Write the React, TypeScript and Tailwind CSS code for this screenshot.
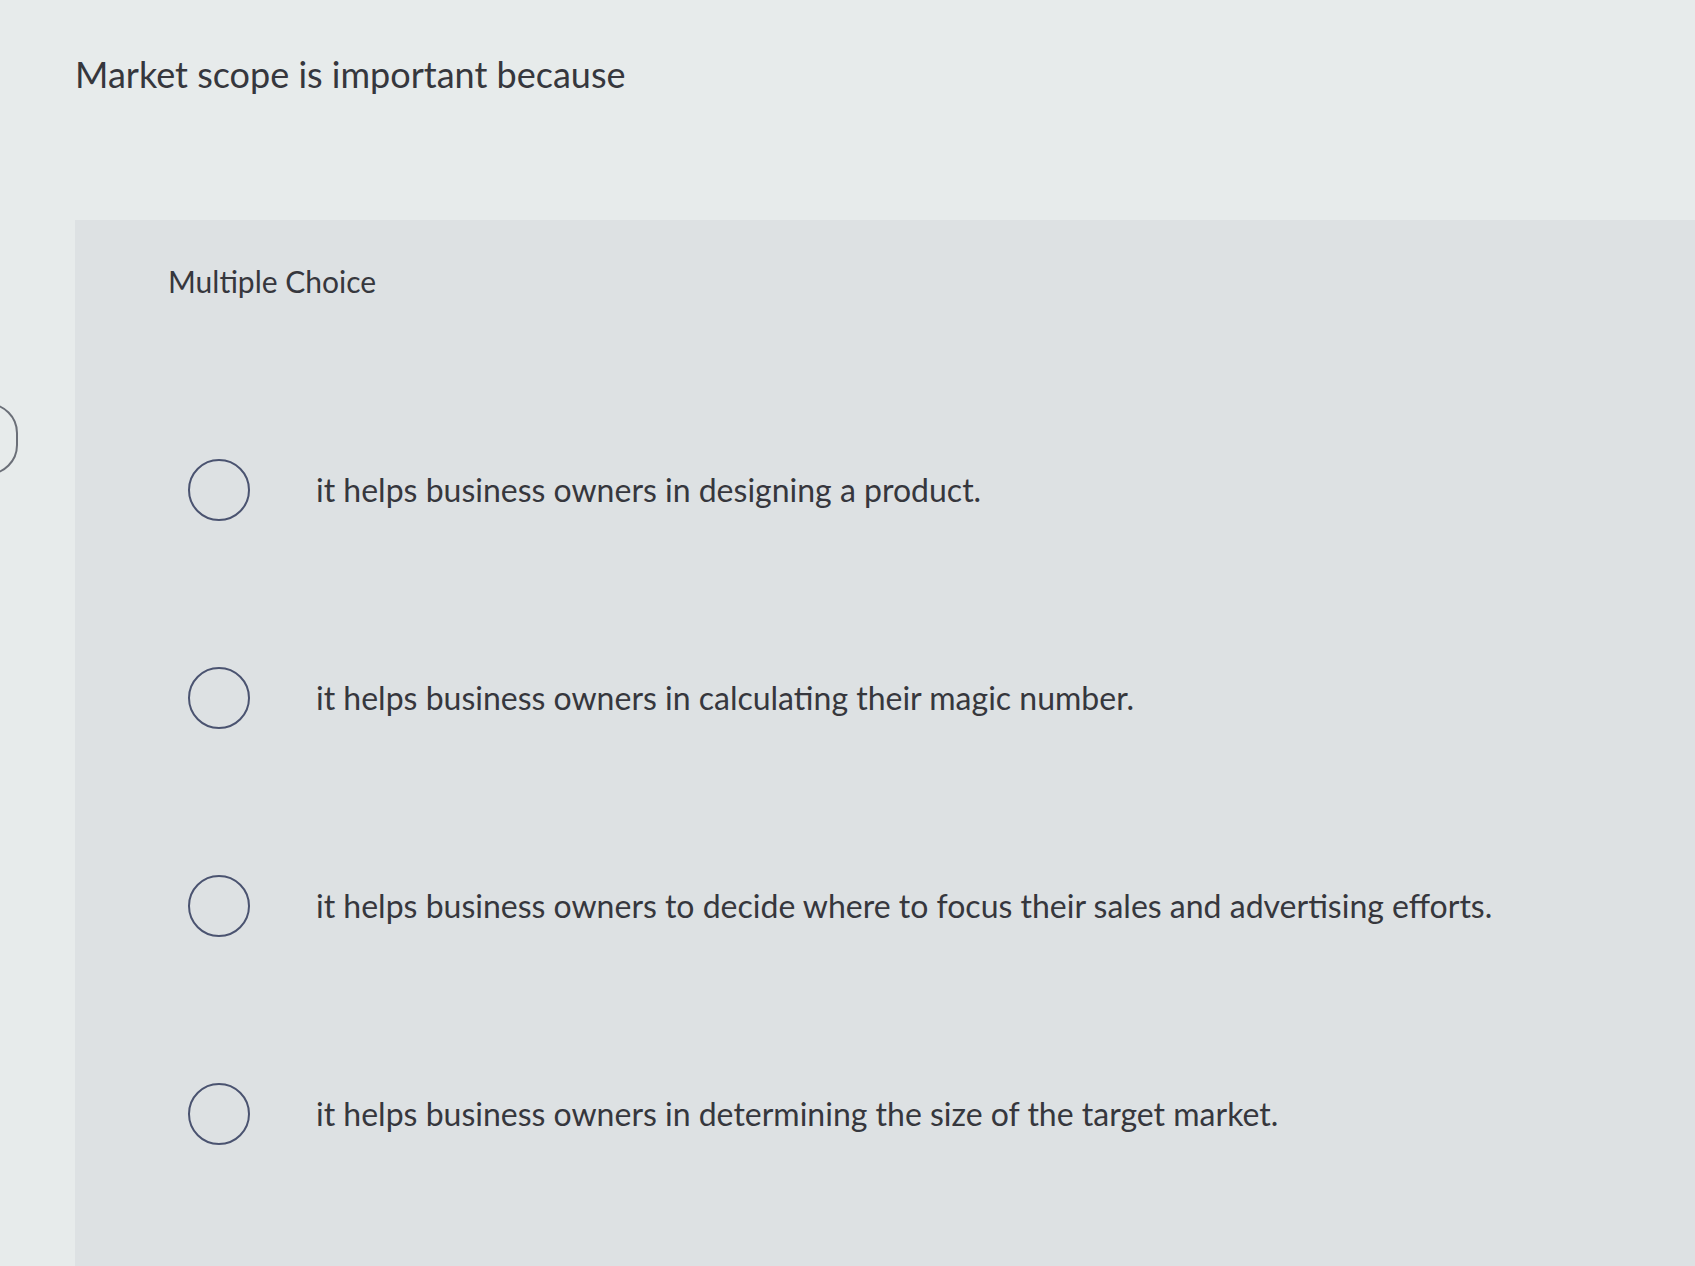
import React from 'react';

const options = [
   'it helps business owners in designing a product.',
   'it helps business owners in calculating their magic number.',
   'it helps business owners to decide where to focus their sales and advertising efforts.',
   'it helps business owners in determining the size of the target market.',
];

const App = () => {
   return (
      <div
         className="relative min-h-screen w-full overflow-hidden bg-[#e7ebeb] text-[#36373d]"
         style={{ fontFamily: 'Lato, "Open Sans", sans-serif' }}
      >
         {/* side toggle cut off by the screen edge */}
         <div className="absolute left-[-52px] top-[403px] h-[72px] w-[70px] rounded-[30px] border-2 border-[#6b6f78]" />

         <div className="flex min-h-screen flex-col pl-[75px]">
            <h1 className="pt-[52px] text-[36px] leading-[44px] font-normal">
               Market scope is important because
            </h1>

            <div className="mt-[124px] flex flex-1 flex-col bg-[#dde1e3] pb-[120px] pl-[93px] pt-[44px]">
               <p className="text-[30px] leading-[34px]">Multiple Choice</p>

               <div className="mt-[161px] flex flex-col gap-[146px] pl-[20px]">
                  {options.map((text) => (
                     <label key={text} className="flex cursor-pointer items-center">
                        <span className="h-[62px] w-[62px] shrink-0 rounded-full border-2 border-[#4a5370]" />
                        <span className="ml-[66px] text-[32px] leading-[62px]">{text}</span>
                     </label>
                  ))}
               </div>
            </div>
         </div>
      </div>
   );
};

export default App;
